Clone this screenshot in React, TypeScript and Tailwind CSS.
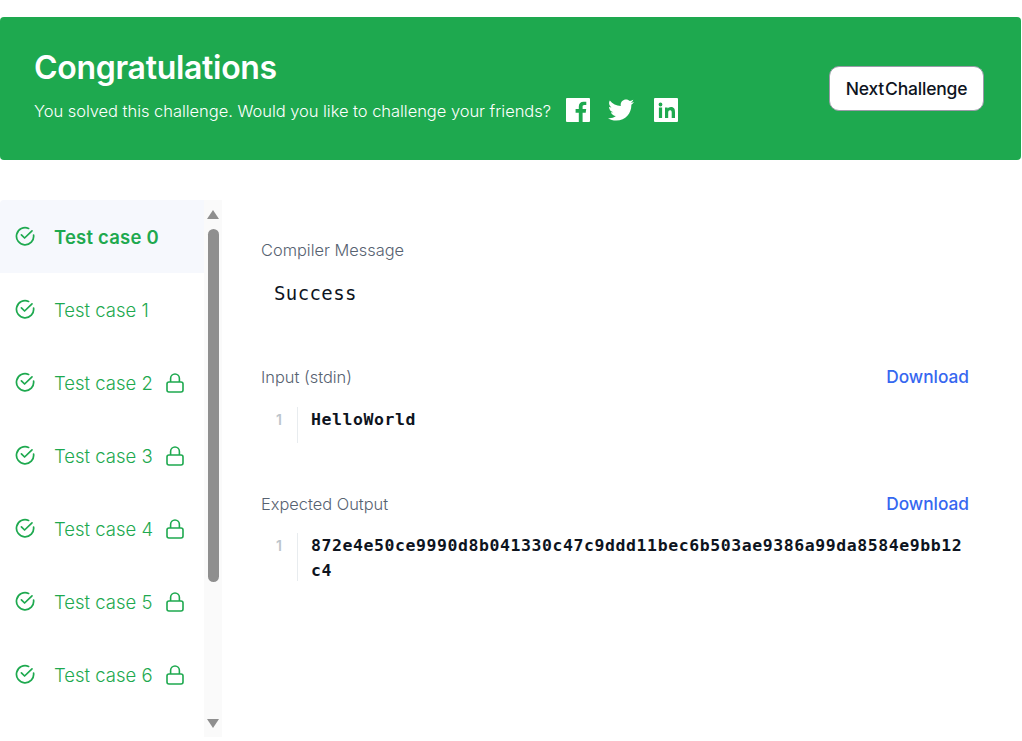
import { FaTwitter } from 'react-icons/fa';

const testCases = [0, 1, 2, 3, 4, 5, 6];

const CheckIcon = () => (
    <svg width="20" height="20" viewBox="0 0 20 20" fill="none" stroke="#1ea94f" strokeWidth="1.7" strokeLinecap="round" strokeLinejoin="round" className="mt-[1px] shrink-0">
        <path d="M18.6 9.2A8.6 8.6 0 1 1 13.6 2.4" />
        <path d="M6.4 8.8 9.6 12 17 4.8" />
    </svg>
);

const LockIcon = () => (
    <svg width="18" height="20" viewBox="0 0 18 20" fill="none" stroke="#1ea94f" strokeWidth="1.6" className="mt-[2px] shrink-0">
        <rect x="1" y="9" width="16" height="10" rx="2" />
        <path d="M4.6 9V5.4a4.4 4.4 0 0 1 8.8 0V9" />
    </svg>
);

const FacebookIcon = () => (
    <svg width="24" height="24" viewBox="0 0 24 24" fill="#fff" className="ml-[15px] shrink-0">
        <path
            fillRule="evenodd"
            d="M1 0h22a1 1 0 0 1 1 1v22a1 1 0 0 1-1 1h-6.4v-9.3h3.1l.5-3.6h-3.6V8.8c0-1 .3-1.8 1.8-1.8h1.9V3.8c-.3 0-1.5-.1-2.8-.1-2.8 0-4.7 1.7-4.7 4.8v2.6H9.6v3.6h3.2V24H1a1 1 0 0 1-1-1V1a1 1 0 0 1 1-1z"
        />
    </svg>
);

const LinkedinIcon = () => (
    <svg width="24" height="24" viewBox="0 0 24 24" fill="#fff" className="ml-[20px] shrink-0">
        <path
            fillRule="evenodd"
            d="M1 0h22a1 1 0 0 1 1 1v22a1 1 0 0 1-1 1H1a1 1 0 0 1-1-1V1a1 1 0 0 1 1-1zM6.5 4.6a1.9 1.9 0 1 0 0 3.8 1.9 1.9 0 0 0 0-3.8zM4.9 9.5V20h3.2V9.5zM11 9.5V20h3.2v-5.2c0-1.3.3-2.6 1.9-2.6s1.6 1.5 1.6 2.7V20h3.3v-5.8c0-3-.6-5.3-4.1-5.3-1.7 0-2.8.8-3.3 1.7V9.5z"
        />
    </svg>
);

const CodeLine = ({ lines, className }: { lines: string[]; className: string }) => (
    <div className={`flex ${className}`}>
        <div className="w-[37px] border-r border-[#e8ecef] pr-[15px] text-right font-['Inter',sans-serif] text-[14px] font-semibold leading-[25px] text-[#bcc5cc]">
            1
        </div>
        <div className="pl-[13px] font-['DejaVu_Sans_Mono',monospace] text-[16.5px] font-bold leading-[25px] tracking-[0.57px] text-[#0e141e]">
            {lines.map((line) => (
                <div key={line}>{line}</div>
            ))}
        </div>
    </div>
);

const SectionHeader = ({ title }: { title: string }) => (
    <div className="flex items-center justify-between pr-[53px]">
        <span className="text-[16.4px] font-light leading-[24px] text-[#576271]">{title}</span>
        <span className="text-[17.3px] font-medium leading-[24px] text-[#3667f0]">Download</span>
    </div>
);

export default function App() {
    return (
        <div className="min-h-[741px] overflow-hidden bg-white pt-[17px] font-['Inter',sans-serif]">
            <div className="mr-[1px] flex h-[143px] items-center justify-between rounded-[4px] bg-[#1ea94f] pl-[34px] pr-[37px]">
                <div className="pb-[4px]">
                    <h1 className="pt-[1px] text-[32px] font-semibold leading-[33px] tracking-[-0.3px] text-white">Congratulations</h1>
                    <div className="mt-[13px] flex items-center">
                        <span className="pt-[1px] text-[16.5px] font-light leading-[24px] tracking-[-0.04px] text-white">
                            You solved this challenge. Would you like to challenge your friends?
                        </span>
                        <FacebookIcon />
                        <FaTwitter className="ml-[18px] text-white" size={26} />
                        <LinkedinIcon />
                    </div>
                </div>
                <button className="flex h-[45px] w-[155px] items-center justify-center rounded-[10px] border border-[#9a9aa8] bg-white pt-[1px] text-[17.5px] font-medium tracking-[-0.2px] text-[#0e141e]">
                    Next<span className="ml-[1px]">Challenge</span>
                </button>
            </div>

            <div className="mt-[40px] flex h-[537px]">
                <div className="flex w-[204px] flex-col">
                    {testCases.map((n) => (
                        <div
                            key={n}
                            className={`flex h-[73px] shrink-0 items-start pl-[15px] pt-[25px] ${n === 0 ? 'rounded-tl-[4px] bg-[#f6f8fd]' : ''}`}
                        >
                            <CheckIcon />
                            <span
                                className={`ml-[19px] w-[112px] shrink-0 text-[18.5px] leading-[24px] text-[#1ea94f] ${n === 0 ? 'font-semibold tracking-[0.2px]' : 'font-light'}`}
                            >
                                Test case {n}
                            </span>
                            {n > 1 && <LockIcon />}
                        </div>
                    ))}
                </div>

                <div className="flex w-[18px] flex-col items-center bg-[#fafafa]">
                    <div className="mt-[10px] h-0 w-0 border-x-[6.5px] border-b-[9px] border-x-transparent border-b-[#8f8f8f]" />
                    <div className="mt-[10px] h-[353px] w-[11px] rounded-full bg-[#8f8f8f]" />
                    <div className="mt-auto mb-[9px] h-0 w-0 border-x-[6.5px] border-t-[9px] border-x-transparent border-t-[#8f8f8f]" />
                </div>

                <div className="flex-1 pl-[39px] pt-[38px]">
                    <div className="text-[16.4px] font-light leading-[24px] text-[#576271]">Compiler Message</div>
                    <div className="mt-[18px] pl-[13px] font-['DejaVu_Sans_Mono',monospace] text-[19px] leading-[26px] tracking-[0.4px] text-[#0e141e]">
                        Success
                    </div>

                    <div className="mt-[59px]">
                        <SectionHeader title="Input (stdin)" />
                        <CodeLine lines={['HelloWorld']} className="mt-[4px] h-[50px] pt-[14px]" />
                    </div>

                    <div className="mt-[49px]">
                        <SectionHeader title="Expected Output" />
                        <CodeLine
                            lines={['872e4e50ce9990d8b041330c47c9ddd11bec6b503ae9386a99da8584e9bb12', 'c4']}
                            className="mt-[5px] h-[60px] pt-[12px]"
                        />
                    </div>
                </div>
            </div>
        </div>
    );
}
